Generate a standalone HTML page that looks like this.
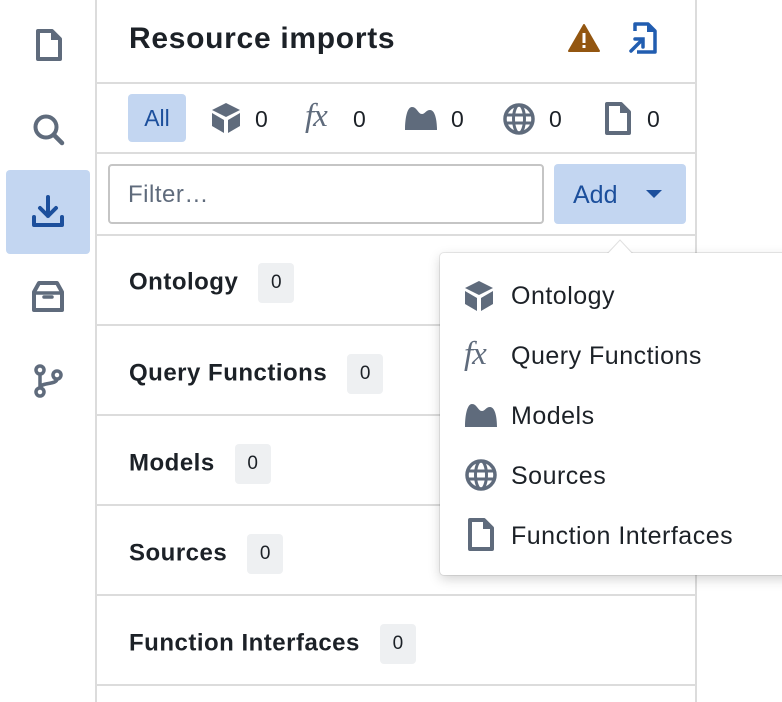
<!DOCTYPE html>
<html><head><meta charset="utf-8"><style>
*{box-sizing:border-box;margin:0;padding:0}
body{width:782px;height:702px;overflow:hidden;background:#fff;font-family:"Liberation Sans",sans-serif;color:#1c2127;position:relative}
.abs{position:absolute}
.side{left:0;top:0;width:97px;height:702px;border-right:2px solid #dcdcdc}
.panel{left:97px;top:0;width:600px;height:702px;border-right:2px solid #dcdcdc}
.hl{position:absolute;left:97px;width:599px;height:2px;background:#dcdcdc}
.title{left:129px;top:22px;font-size:30px;font-weight:bold;letter-spacing:0.7px}
.chip{left:128px;top:94px;width:58px;height:48px;background:#c3d6f1;border-radius:4px;color:#1c4f9c;font-size:23px;line-height:48px;text-align:center}
.cnt{font-size:23px;top:106px}
.input{left:108px;top:164px;width:436px;height:60px;border:2px solid #c5c5c5;border-radius:4px;color:#5f6b7c;font-size:24px;line-height:58px;padding-left:18px;letter-spacing:0.5px}
.add{left:554px;top:164px;width:132px;height:60px;background:#c3d6f1;border-radius:4px;color:#1c4f9c;font-size:25px;line-height:62px;padding-left:19px}
.row{left:129px;font-size:24px;font-weight:bold;letter-spacing:0.5px}
.badge{display:inline-block;background:#eef0f2;border-radius:4px;width:36px;height:40px;line-height:40px;text-align:center;font-weight:normal;font-size:19px;margin-left:20px;vertical-align:middle;letter-spacing:0}
.pop{left:440px;top:253px;width:360px;height:322px;background:#fff;border-radius:4px;box-shadow:0 0 0 1px rgba(0,0,0,.08),0 4px 12px rgba(0,0,0,.18)}
.mi{position:absolute;left:71px;font-size:25px;letter-spacing:0.5px;color:#1c2127}
.ic{position:absolute}
.fx{font-family:'Liberation Serif',serif;font-style:italic;font-size:33px;color:#5f6b7c;letter-spacing:-1px}
</style></head><body>
<div class="abs side"></div>
<div class="abs panel"></div>
<div class="hl" style="top:82px"></div>
<div class="hl" style="top:152px"></div>
<div class="hl" style="top:234px"></div>
<div class="hl" style="top:324px"></div>
<div class="hl" style="top:414px"></div>
<div class="hl" style="top:504px"></div>
<div class="hl" style="top:594px"></div>
<div class="hl" style="top:684px"></div>

<svg class="abs" style="left:35px;top:28px" width="28" height="34" viewBox="0 0 28 34"><path d="M3 3h14l8 8v20H3z" fill="none" stroke="#5f6b7c" stroke-width="4" stroke-linejoin="round"/><path d="M16 3v9h9z" fill="#5f6b7c"/></svg>
<svg class="abs" style="left:31px;top:112px" width="36" height="36" viewBox="0 0 36 36"><circle cx="15" cy="15" r="10.5" fill="none" stroke="#5f6b7c" stroke-width="4"/><path d="M23 23l8 8" stroke="#5f6b7c" stroke-width="4.5" stroke-linecap="round"/></svg>
<div class="abs" style="left:6px;top:170px;width:84px;height:84px;background:#c3d6f1;border-radius:4px"></div>
<svg class="abs" style="left:31px;top:194px" width="34" height="36" viewBox="0 0 34 36"><path d="M17 3v19M9 14l8 8 8-8" fill="none" stroke="#1c4f9c" stroke-width="4" stroke-linecap="round" stroke-linejoin="round"/><path d="M3 23v8h28v-8" fill="none" stroke="#1c4f9c" stroke-width="4" stroke-linecap="round" stroke-linejoin="round"/></svg>
<svg class="abs" style="left:31px;top:280px" width="34" height="34" viewBox="0 0 34 34"><path d="M3 12l5-9h18l5 9v18H3z" fill="none" stroke="#5f6b7c" stroke-width="4" stroke-linejoin="round"/><path d="M3 13h28M13 17h8" stroke="#5f6b7c" stroke-width="3.5" stroke-linecap="round"/></svg>
<svg class="abs" style="left:32px;top:363px" width="32" height="36" viewBox="0 0 32 36"><circle cx="8" cy="7" r="4" fill="none" stroke="#5f6b7c" stroke-width="3.5"/><circle cx="8" cy="29" r="4" fill="none" stroke="#5f6b7c" stroke-width="3.5"/><circle cx="25" cy="12" r="4" fill="none" stroke="#5f6b7c" stroke-width="3.5"/><path d="M8 11v14M25 16c0 6-17 3-17 9" fill="none" stroke="#5f6b7c" stroke-width="3.5"/></svg>

<div class="abs title">Resource imports</div>
<svg class="abs" style="left:567px;top:23px" width="34" height="30" viewBox="0 0 34 30"><path d="M17 2L2 28h30z" fill="#935610" stroke="#935610" stroke-width="2" stroke-linejoin="round"/><rect x="15.5" y="10" width="3" height="10" fill="#fff"/><rect x="15.5" y="22" width="3" height="3" fill="#fff"/></svg>
<svg class="abs" style="left:627px;top:21px" width="32" height="34" viewBox="0 0 32 34"><path d="M8 10V3h13l7 7v21H10" fill="none" stroke="#215db0" stroke-width="3.5" stroke-linejoin="round"/><path d="M20 3v8h8" fill="#215db0"/><path d="M4 30l11-11M8 18h8v8" fill="none" stroke="#215db0" stroke-width="3.5" stroke-linecap="round"/></svg>

<div class="abs chip">All</div>
<svg class="abs" style="left:211px;top:102px" width="30" height="32" viewBox="0 0 30 32"><path d="M15 1L1 8l14 7 14-7z M1 11v13l12 7V18z M29 11v13l-12 7V18z" fill="#5f6b7c"/></svg>
<div class="abs cnt" style="left:255px">0</div>
<div class="abs fx" style="left:305px;top:98px">fx</div>
<div class="abs cnt" style="left:353px">0</div>
<svg class="abs" style="left:404px;top:105px" width="34" height="26" viewBox="0 0 34 26"><path d="M1 25C1 14 3 2 8 2c5 0 6 7 10 7 3 0 4-4 8-4 5 0 7 10 7 20z" fill="#5f6b7c"/></svg>
<div class="abs cnt" style="left:451px">0</div>
<svg class="abs" style="left:502px;top:102px" width="34" height="34" viewBox="0 0 34 34"><circle cx="17" cy="17" r="14" fill="none" stroke="#5f6b7c" stroke-width="3.5"/><ellipse cx="17" cy="17" rx="5.5" ry="14" fill="none" stroke="#5f6b7c" stroke-width="3"/><path d="M3 13h28M3 21h28" stroke="#5f6b7c" stroke-width="3"/></svg>
<div class="abs cnt" style="left:549px">0</div>
<svg class="abs" style="left:604px;top:101px" width="28" height="35" viewBox="0 0 28 35"><path d="M3 3h14l8 8v21H3z" fill="none" stroke="#5f6b7c" stroke-width="4" stroke-linejoin="round"/><path d="M16 3v9h9z" fill="#5f6b7c"/></svg>
<div class="abs cnt" style="left:647px">0</div>

<div class="abs input">Filter…</div>
<div class="abs add">Add <span style="display:inline-block;margin-left:22px;width:0;height:0;border-left:8px solid transparent;border-right:8px solid transparent;border-top:8px solid #1c4f9c;vertical-align:middle;position:relative;top:-2px"></span></div>

<div class="abs row" style="top:263px">Ontology<span class="badge">0</span></div>
<div class="abs row" style="top:354px">Query Functions<span class="badge">0</span></div>
<div class="abs row" style="top:444px">Models<span class="badge">0</span></div>
<div class="abs row" style="top:534px">Sources<span class="badge">0</span></div>
<div class="abs row" style="top:624px">Function Interfaces<span class="badge">0</span></div>

<div class="abs pop">
<svg class="ic" style="left:167px;top:-20px" width="26" height="22" viewBox="0 0 26 22"><path d="M0 21L13 7l13 14z" fill="#fff" stroke="rgba(0,0,0,.12)" stroke-width="1"/><rect x="0" y="20" width="26" height="3" fill="#fff"/></svg>
<svg class="ic" style="left:24px;top:27px" width="30" height="32" viewBox="0 0 30 32"><path d="M15 1L1 8l14 7 14-7z M1 11v13l12 7V18z M29 11v13l-12 7V18z" fill="#5f6b7c"/></svg>
<div class="mi" style="top:29px">Ontology</div>
<div class="ic fx" style="left:24px;top:83px">fx</div>
<div class="mi" style="top:89px">Query Functions</div>
<svg class="ic" style="left:24px;top:149px" width="34" height="26" viewBox="0 0 34 26"><path d="M1 25C1 14 3 2 8 2c5 0 6 7 10 7 3 0 4-4 8-4 5 0 7 10 7 20z" fill="#5f6b7c"/></svg>
<div class="mi" style="top:149px">Models</div>
<svg class="ic" style="left:24px;top:205px" width="34" height="34" viewBox="0 0 34 34"><circle cx="17" cy="17" r="14" fill="none" stroke="#5f6b7c" stroke-width="3.5"/><ellipse cx="17" cy="17" rx="5.5" ry="14" fill="none" stroke="#5f6b7c" stroke-width="3"/><path d="M3 13h28M3 21h28" stroke="#5f6b7c" stroke-width="3"/></svg>
<div class="mi" style="top:209px">Sources</div>
<svg class="ic" style="left:27px;top:264px" width="28" height="35" viewBox="0 0 28 35"><path d="M3 3h14l8 8v21H3z" fill="none" stroke="#5f6b7c" stroke-width="4" stroke-linejoin="round"/><path d="M16 3v9h9z" fill="#5f6b7c"/></svg>
<div class="mi" style="top:269px">Function Interfaces</div>
</div>
</body></html>
